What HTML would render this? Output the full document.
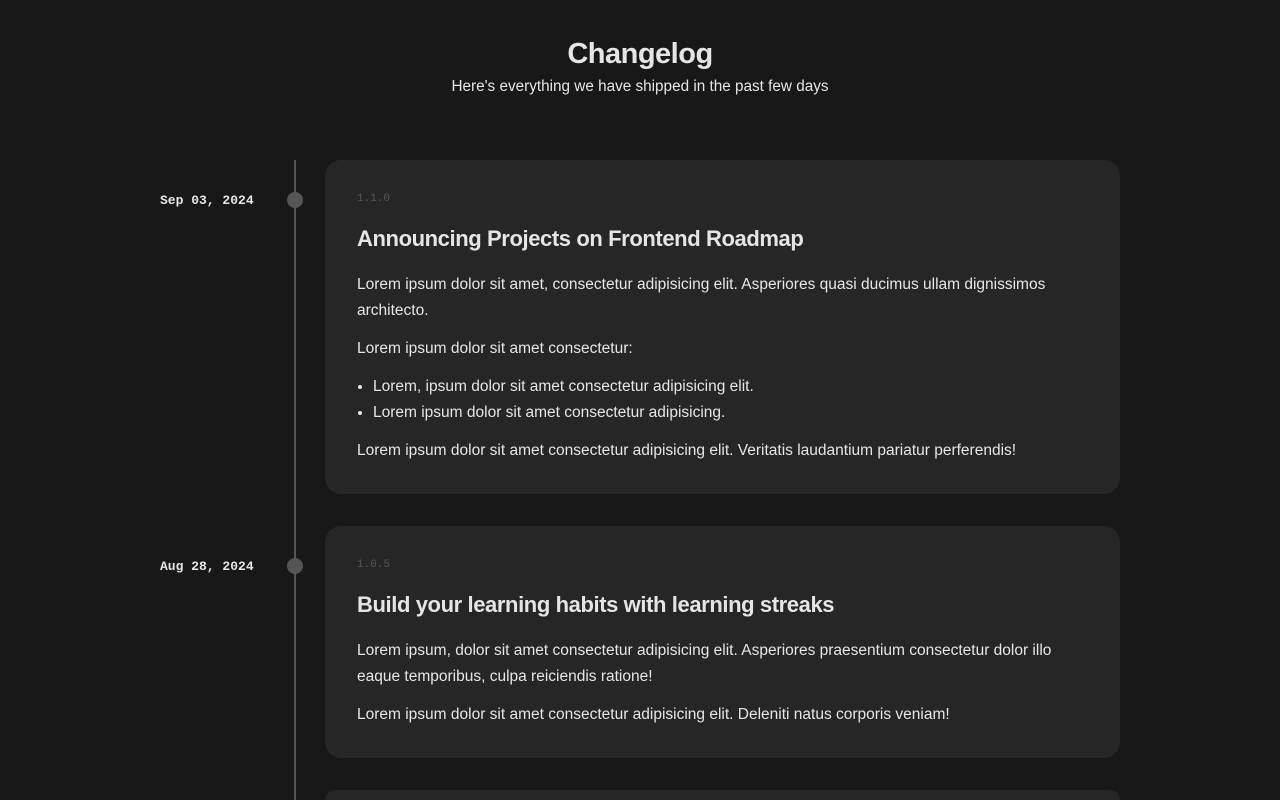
<!DOCTYPE html>
<html><head><style>
html,body{margin:0;height:800px;overflow:hidden}
body{background:#181818;color:#e5e5e5;font-family:"Liberation Sans",sans-serif;width:1280px;position:relative}
h1{position:absolute;top:38px;left:0;width:1280px;text-align:center;margin:0;font-size:29px;font-weight:bold;letter-spacing:-0.5px}
.sub{position:absolute;top:78px;left:0;width:1280px;text-align:center;font-size:15.3px}
.line{position:absolute;left:294px;top:160px;width:2px;height:640px;background:#555}
.dot{position:absolute;left:287px;width:16px;height:16px;border-radius:50%;background:#555}
.date{position:absolute;left:160px;font-family:"Liberation Mono",monospace;font-size:13px;font-weight:bold;color:#e5e5e5}
.card{position:absolute;left:325px;width:795px;background:#262626;border-radius:16px;box-sizing:border-box;padding:0 32px}
.ver{font-family:"Liberation Mono",monospace;font-size:11px;color:#555;position:absolute;top:33px}
.card h2{position:absolute;margin:0;font-size:22px;font-weight:bold;letter-spacing:-0.4px}
.body{position:absolute;left:32px;right:40px;font-size:15.5px;line-height:26px}
.body p{margin:0 0 12px}
ul{margin:0 0 12px;padding-left:16px}
</style></head><body>
<h1>Changelog</h1>
<div class="sub">Here's everything we have shipped in the past few days</div>
<div class="line"></div>
<div class="dot" style="top:192px"></div>
<div class="date" style="top:193px">Sep 03, 2024</div>
<div class="card" style="top:160px;height:334px">
<div class="ver">1.1.0</div>
<h2 style="top:66px">Announcing Projects on Frontend Roadmap</h2>
<div class="body" style="top:112px">
<p>Lorem ipsum dolor sit amet, consectetur adipisicing elit. Asperiores quasi ducimus ullam dignissimos architecto.</p>
<p>Lorem ipsum dolor sit amet consectetur:</p>
<ul><li>Lorem, ipsum dolor sit amet consectetur adipisicing elit.</li><li>Lorem ipsum dolor sit amet consectetur adipisicing.</li></ul>
<p>Lorem ipsum dolor sit amet consectetur adipisicing elit. Veritatis laudantium pariatur perferendis!</p>
</div></div>
<div class="dot" style="top:558px"></div>
<div class="date" style="top:559px">Aug 28, 2024</div>
<div class="card" style="top:526px;height:232px">
<div class="ver">1.0.5</div>
<h2 style="top:66px">Build your learning habits with learning streaks</h2>
<div class="body" style="top:112px">
<p>Lorem ipsum, dolor sit amet consectetur adipisicing elit. Asperiores praesentium consectetur dolor illo eaque temporibus, culpa reiciendis ratione!</p>
<p>Lorem ipsum dolor sit amet consectetur adipisicing elit. Deleniti natus corporis veniam!</p>
</div></div>
<div class="card" style="top:790px;height:10px;border-radius:16px 16px 0 0"></div>
</body></html>
